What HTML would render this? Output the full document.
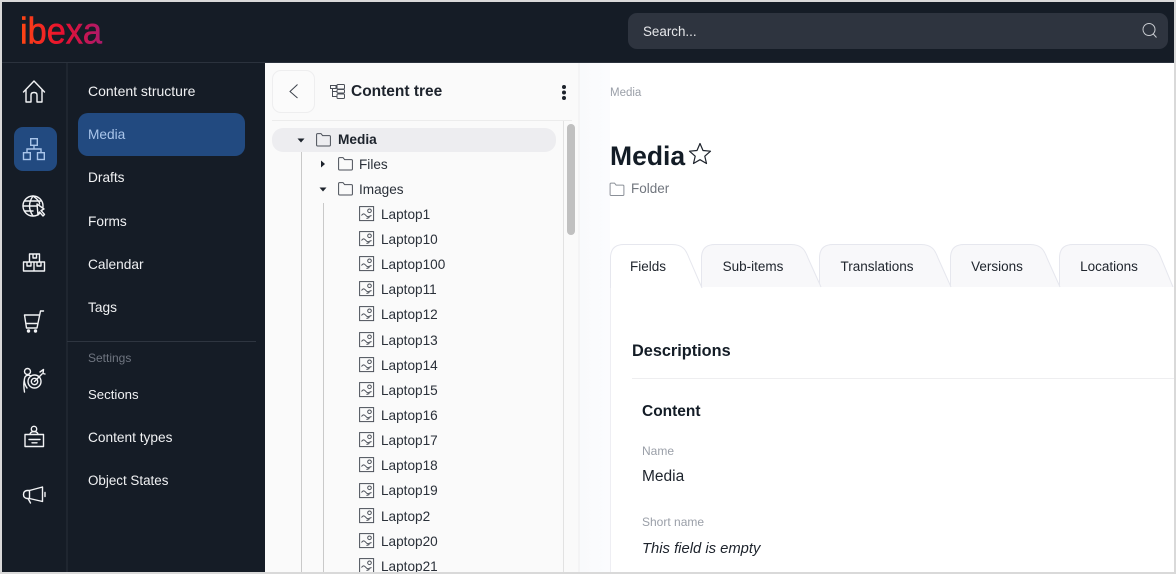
<!DOCTYPE html>
<html lang="en">
<head>
<meta charset="utf-8">
<title>Media</title>
<style>
html,body{margin:0;padding:0;width:1176px;height:574px;overflow:hidden;background:#d9d9d9}
body{position:relative;font-family:"Liberation Sans",sans-serif;color:#131c26}
div{position:absolute}
.t{position:absolute;white-space:nowrap;height:20px;line-height:20px;transform:translateY(-10px)}
.n{left:88px;color:#f0f1f3;font-size:13.7px}
.m{transform:translateY(-9px)}
.l{left:381px;font-size:13.6px;color:#2a3039;transform:translateY(-9px)}
.c{transform:translate(-50%,-10px);font-size:13.5px;color:#20262e}
svg{position:absolute;left:0;top:0}
</style>
</head>
<body>
<div style="left:2px;top:2px;width:1172px;height:570px;background:#fff;overflow:hidden"></div>
<div style="left:2px;top:2px;width:1172px;height:60px;background:#151c26"></div>
<div style="left:2px;top:62px;width:1172px;height:1px;background:#2b323d"></div>
<div style="left:2px;top:63px;width:263px;height:509px;background:#151c26"></div>
<div style="left:66px;top:63px;width:2px;height:509px;background:#1f2630"></div>
<div style="left:67px;top:341px;width:189px;height:1px;background:#2e3540"></div>
<div style="left:14px;top:127px;width:43px;height:44px;border-radius:9px;background:#224a80"></div>
<div style="left:78px;top:113px;width:167px;height:43px;border-radius:10px;background:#224a80"></div>
<div style="left:628px;top:13px;width:540px;height:36px;border-radius:9px;background:#2e343f"></div>

<div style="left:265px;top:63px;width:313px;height:509px;background:#fafafa"></div>
<div style="left:578px;top:63px;width:2px;height:509px;background:#f4f4f5"></div>
<div style="left:580px;top:63px;width:30px;height:509px;background:linear-gradient(90deg,#f9fafc,#fbfcfe)"></div>
<div style="left:610px;top:287px;width:1px;height:285px;background:#eeeef3"></div>
<div style="left:272px;top:70px;width:41px;height:41px;border:1px solid #eeeeef;border-radius:9px;background:#fbfbfb"></div>
<div style="left:272px;top:120px;width:300px;height:1px;background:#ececec"></div>
<div style="left:272px;top:128px;width:284px;height:24px;border-radius:11px;background:#ededf0"></div>
<div style="left:563px;top:121px;width:1px;height:451px;background:#e2e2e2"></div>
<div style="left:567px;top:124px;width:8px;height:111px;border-radius:4px;background:#c0c0c0"></div>
<div style="left:301px;top:152px;width:1px;height:420px;background:#c9c9c9"></div>
<div style="left:323px;top:203px;width:1px;height:369px;background:#c9c9c9"></div>
<div style="left:632px;top:378px;width:542px;height:1px;background:#eeeef0"></div>

<svg width="1176" height="574" viewBox="0 0 1176 574" fill="none">
<defs>
<linearGradient id="g" x1="20" x2="102" y1="0" y2="0" gradientUnits="userSpaceOnUse">
<stop offset="0" stop-color="#ff4713"/><stop offset=".5" stop-color="#e8102f"/><stop offset="1" stop-color="#ad1a6b"/>
</linearGradient>
<g id="folder" fill="none" stroke-width="1"><path d="M.6 12V1.600Q.6 .6 1.600 .6H5L6.600 2.600H13.400Q14.400 2.600 14.400 3.600V12Q14.400 13 13.400 13H1.600Q.6 13 .6 12Z"/></g>
<g id="img" fill="none" stroke="#4a4f58" stroke-width="1"><rect x=".6" y=".6" width="14" height="14"/><circle cx="10.500" cy="4.800" r="1.800"/><path d="M2.500 9.500Q4.500 6.500 6.500 9T10 10.500L12.500 9.500M7.500 12.500L10.500 11.500"/></g>
</defs>

<text x="20" y="43.500" font-family="Liberation Sans" font-size="37" textLength="82" lengthAdjust="spacingAndGlyphs" fill="url(#g)" stroke="url(#g)" stroke-width=".6">ibexa</text>

<g stroke="#f2f3f5" stroke-width="1.4" stroke-linejoin="round" stroke-linecap="round">
<path d="M23.500 92L34 81L44.500 92M26 90V102H31V95Q31 92.500 34 92.500T37 95V102H42V90"/>
<circle cx="33" cy="206" r="10"/><path d="M23 206H37M33 196Q26 206 33 216M33 196Q40 201 39.500 204M24.500 201H41M24.500 211H33"/>
<path d="M37 204L44 209L41 210.500L44.500 214.500L43 216L39.500 212L38 215Z" fill="#151c26"/>
<path d="M29.500 262V254H39.500V262M33 254V258H36.500V254M23.500 262H44.500V271H23.500ZM34 262V271M27 262V266H31V262M37 262V266H41V262"/>
<path d="M43.500 311H40.500L37 328H26.500L24.500 315H39.500M25.800 323.500H38"/>
<circle cx="28.500" cy="331" r="1" fill="#f2f3f5"/><circle cx="35.500" cy="331" r="1" fill="#f2f3f5"/>
<circle cx="27.500" cy="371.500" r="3"/><path d="M24.500 392Q23 383 25 377Q27 374 31 376M25 377Q23 382 27 388"/>
<circle cx="34.500" cy="381.500" r="6.500"/><circle cx="34.500" cy="381.500" r="3.200"/><path d="M34.500 381.500L42 374M40 372L43.500 369.500L43 373.500L45 374"/>
<circle cx="34" cy="429" r="2.700"/><path d="M30 434Q31 431.500 34 431.500T38 434"/>
<rect x="25" y="434.500" width="18.500" height="12"/><path d="M29 439.500H40M32 442.800H37"/>
<path d="M29.500 490.500L42.500 487V501.500L29.500 498.500H27Q23.500 498 23.500 494.500T27 490.500ZM29.500 490.500V498.500M28 498.500L30.500 503M45 492.500V496.500"/>
</g>
<g stroke="#a9c5ea" stroke-width="1.400">
<rect x="30.700" y="138.700" width="6.600" height="6.600"/><rect x="23.500" y="152.700" width="6.800" height="6.800"/><rect x="37.500" y="152.700" width="6.800" height="6.800"/>
<path d="M34 145.300V149M27 152.700V149H41V152.700"/>
</g>
<circle cx="1149" cy="29.500" r="6" stroke="#c9ccd1" stroke-width="1"/><path d="M1153.300 34L1156.500 37.500" stroke="#c9ccd1" stroke-width="1"/>

<path d="M297.500 84.500L290 91.500L297.500 98" stroke="#3c424b" stroke-width="1"/>
<g stroke="#4a4f58" stroke-width="1"><path d="M330.500 85.500H336V88.500H330.500ZM332.500 88.500V96.500H337M332.500 91.500H337"/><rect x="337" y="84.500" width="7.500" height="4.500" rx="1"/><rect x="337" y="89.500" width="7.500" height="3.500" rx="1"/><rect x="337" y="94" width="7.500" height="4.500" rx="1"/></g>
<circle cx="564" cy="87" r="2" fill="#1d232c"/><circle cx="564" cy="92.500" r="2" fill="#1d232c"/><circle cx="564" cy="98" r="2" fill="#1d232c"/>

<path d="M297.500 138.500H304.500L301 142.500Z" fill="#1d232c"/>
<path d="M321 160.500V167.500L325 164Z" fill="#1d232c"/>
<path d="M319.500 187.500H326.500L323 191.500Z" fill="#1d232c"/>
<use href="#folder" x="316" y="133" stroke="#4a4f58"/>
<use href="#folder" x="338" y="157" stroke="#4a4f58"/>
<use href="#folder" x="338" y="182" stroke="#4a4f58"/>
<use href="#img" x="359" y="206"/><use href="#img" x="359" y="231"/><use href="#img" x="359" y="256"/><use href="#img" x="359" y="281"/><use href="#img" x="359" y="306"/><use href="#img" x="359" y="332"/><use href="#img" x="359" y="357"/><use href="#img" x="359" y="382"/><use href="#img" x="359" y="407"/><use href="#img" x="359" y="432"/><use href="#img" x="359" y="457"/><use href="#img" x="359" y="483"/><use href="#img" x="359" y="508"/><use href="#img" x="359" y="533"/><use href="#img" x="359" y="558"/>

<path d="M700 143.500L703 150.500L710.500 151.200L704.800 156.200L706.500 163.500L700 159.700L693.500 163.500L695.200 156.200L689.500 151.200L697 150.500Z" stroke="#1d232c" stroke-width="1.200" stroke-linejoin="round"/>
<use href="#folder" x="609.500" y="182.500" stroke="#8b9098"/>

<g stroke="#e6e7ee" stroke-width="1" fill="#f8f8fa">
<path d="M1059.500 287V258Q1059.500 244.500 1073 244.500H1143C1154 244.500 1158 250 1161 258L1173 287"/>
<path d="M950.500 287V258Q950.500 244.500 964 244.500H1030C1041 244.500 1044 250 1047 258L1060 287"/>
<path d="M819.500 287V258Q819.500 244.500 833 244.500H921C932 244.500 935 250 938 258L951 287"/>
<path d="M701.500 287V258Q701.500 244.500 715 244.500H791C802 244.500 805 250 808 258L821 287"/>
<path d="M610.500 288V258Q610.500 244.500 624 244.500H672C683 244.500 686 250 689 258L702 288" fill="#fff"/>
</g>
</svg>

<span class="t n" style="top:91px;font-size:14px">Content structure</span>
<span class="t n m" style="top:134px;color:#a9c5ea">Media</span>
<span class="t n m" style="top:177px">Drafts</span>
<span class="t n m" style="top:221px">Forms</span>
<span class="t n m" style="top:264px">Calendar</span>
<span class="t n m" style="top:307px">Tags</span>
<span class="t n" style="top:358px;font-size:12px;color:#6f7580">Settings</span>
<span class="t n m" style="top:394px;font-size:13.2px">Sections</span>
<span class="t n m" style="top:437px">Content types</span>
<span class="t n m" style="top:480px;font-size:13.4px">Object States</span>
<span class="t" style="left:643px;top:32px;font-size:13.4px;color:#e6e7ea">Search...</span>

<span class="t" style="left:351px;top:92px;font-size:15.500px;font-weight:bold;color:#1d232c">Content tree</span>
<span class="t" style="left:338px;top:139.500px;font-size:13.700px;font-weight:bold;color:#1d232c">Media</span>
<span class="t m" style="left:359px;top:164px;font-size:13.600px;color:#2a3039">Files</span>
<span class="t m" style="left:359px;top:189px;font-size:13.600px;color:#2a3039">Images</span>
<span class="t l" style="top:213.500px">Laptop1</span>
<span class="t l" style="top:238.500px">Laptop10</span>
<span class="t l" style="top:264px">Laptop100</span>
<span class="t l" style="top:289px">Laptop11</span>
<span class="t l" style="top:314px">Laptop12</span>
<span class="t l" style="top:339.500px">Laptop13</span>
<span class="t l" style="top:364.500px">Laptop14</span>
<span class="t l" style="top:390px">Laptop15</span>
<span class="t l" style="top:415px">Laptop16</span>
<span class="t l" style="top:440px">Laptop17</span>
<span class="t l" style="top:465px">Laptop18</span>
<span class="t l" style="top:490px">Laptop19</span>
<span class="t l" style="top:515.500px">Laptop2</span>
<span class="t l" style="top:541px">Laptop20</span>
<span class="t l" style="top:566px">Laptop21</span>
<div style="left:265px;top:572px;width:911px;height:2px;background:#d9d9d9"></div>

<span class="t" style="left:610px;top:93px;font-size:11.500px;color:#9a9fa8">Media</span>
<span class="t" style="left:610px;top:156px;font-size:26.500px;font-weight:bold;color:#131c26">Media</span>
<span class="t" style="left:631px;top:189px;font-size:13.500px;color:#71767e">Folder</span>
<span class="t c" style="left:648px;top:266.500px">Fields</span>
<span class="t c" style="left:753px;top:266.500px">Sub-items</span>
<span class="t c" style="left:877px;top:266.500px">Translations</span>
<span class="t c" style="left:997px;top:266.500px">Versions</span>
<span class="t c" style="left:1109px;top:266.500px">Locations</span>
<span class="t" style="left:632px;top:351px;font-size:16.300px;font-weight:bold;color:#131c26">Descriptions</span>
<span class="t" style="left:642px;top:412px;font-size:15.500px;font-weight:bold;color:#131c26">Content</span>
<span class="t" style="left:642px;top:450.500px;font-size:12px;color:#9a9fa8">Name</span>
<span class="t" style="left:642px;top:477px;font-size:15.500px;color:#1d232c">Media</span>
<span class="t" style="left:642px;top:521.500px;font-size:12px;color:#9a9fa8">Short name</span>
<span class="t" style="left:642px;top:549px;font-size:14.800px;font-style:italic;color:#1d232c">This field is empty</span>
<div style="left:1174px;top:0;width:2px;height:574px;background:#d9d9d9"></div>
</body>
</html>
